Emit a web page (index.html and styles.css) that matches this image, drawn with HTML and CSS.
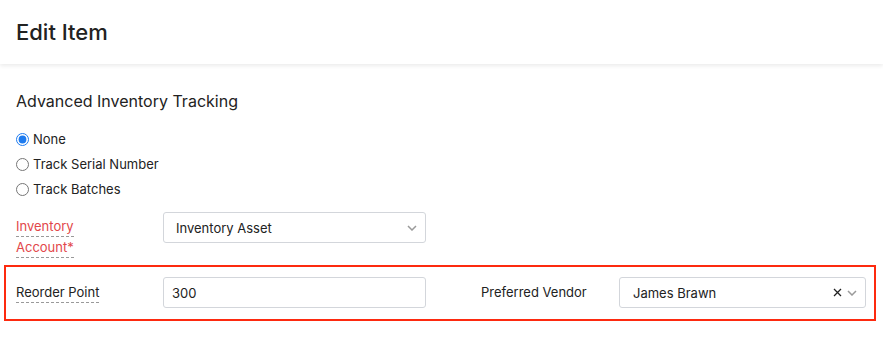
FILE: index.html
```html
<!DOCTYPE html>
<html>
    <head>
        <meta charset="UTF-8">
        <title>Edit Item</title>
        <link rel="stylesheet" href="styles.css">
    </head>
    <body>
        <div class="header">
            <h1>Edit Item</h1>
        </div>
        <div class="content">
            <h2>Advanced Inventory Tracking</h2>
            <div class="radios">
                <label class="radio"><input type="radio" name="track" checked> None</label>
                <label class="radio"><input type="radio" name="track"> Track Serial Number</label>
                <label class="radio"><input type="radio" name="track"> Track Batches</label>
            </div>

            <div class="row">
                <div class="label required"><span class="dashed">Inventory Account*</span></div>
                <div class="control select">
                    <span class="value">Inventory Asset</span>
                    <svg class="chevron" width="10" height="6" viewBox="0 0 10 6"><path d="M1 1l4 4 4-4" fill="none" stroke="#9a9a9a" stroke-width="1.5"/></svg>
                </div>
            </div>

            <div class="highlight">
                <div class="row center">
                    <div class="label"><span class="dashed">Reorder Point</span></div>
                    <div class="control">
                        <span class="value">300</span>
                    </div>
                    <div class="label vendor-label">Preferred Vendor</div>
                    <div class="control select vendor">
                        <span class="value">James Brawn</span>
                        <svg class="clear" width="9" height="9" viewBox="0 0 9 9"><path d="M1 1l7 7M8 1l-7 7" stroke="#222" stroke-width="1.3"/></svg>
                        <svg class="chevron" width="10" height="6" viewBox="0 0 10 6"><path d="M1 1l4 4 4-4" fill="none" stroke="#9a9a9a" stroke-width="1.5"/></svg>
                    </div>
                </div>
            </div>
        </div>
    </body>
</html>
```
FILE: styles.css
```css
body{
    margin: 0;
    background: white;
    color: #222;
    font-family: Inter, "Noto Sans", sans-serif;
    font-size: 13px;
}

.header{
    height: 64px;
    display: flex;
    align-items: center;
    padding: 0 16px;
    box-shadow: 0 2px 4px rgba(0, 0, 0, 0.08);
}

h1{
    margin: 0;
    font-size: 22px;
    font-weight: 500;
}

.content{
    padding-top: 27px;
}

h2{
    margin: 0 16px 19px;
    font-size: 16px;
    font-weight: 400;
}

.radios{
    padding: 0 16px;
    display: flex;
    flex-direction: column;
    gap: 7px;
    margin-bottom: 14px;
}

.radio{
    display: flex;
    align-items: center;
    height: 18px;
}

.radio input{
    margin: 0 4px 0 0;
    width: 13px;
    height: 13px;
    accent-color: #1e7bef;
}

.row{
    display: flex;
    align-items: flex-start;
    padding: 0 16px;
}

.row.center{
    align-items: center;
    padding: 0;
}

.label{
    width: 147px;
    flex: none;
    line-height: 21px;
}

.required{
    color: #e2474a;
    padding-top: 4px;
    padding-right: 70px;
    box-sizing: border-box;
}

.dashed{
    border-bottom: 1px dashed #999;
    padding-bottom: 2px;
}

.control{
    width: 263px;
    height: 31px;
    box-sizing: border-box;
    border: 1px solid #d3d6db;
    border-radius: 3px;
    display: flex;
    align-items: center;
    padding: 0 8px;
    flex: none;
}

.select{
    padding-left: 12px;
}

.value{
    flex: 1;
}

.chevron{
    margin-left: 4px;
}

.vendor-label{
    width: 138px;
    margin-left: 55px;
}

.vendor{
    width: 247px;
    padding-left: 13px;
}

.clear{
    margin-right: 1px;
}

.highlight{
    border: 2px solid #fd2a0f;
    margin: 7px 7px 0 4px;
    padding: 10px 10px 11px 10px;
}
```
